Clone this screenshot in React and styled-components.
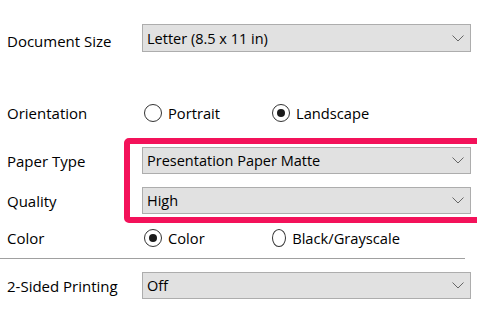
import React from 'react';
import styled, { createGlobalStyle } from 'styled-components';

const Global = createGlobalStyle`
  html, body {
    margin: 0;
    background: #ffffff;
    overflow: hidden;
  }
  body {
    font-family: "Open Sans", "Noto Sans", sans-serif;
    color: #000;
  }
`;

const Page = styled.div`
  width: 477px;
  height: 315px;
  padding-top: 24px;
  box-sizing: border-box;
  position: relative;
  overflow: hidden;
`;

const Row = styled.div`
  display: flex;
  align-items: center;
  height: ${p => p.$h || 27}px;
  margin-top: ${p => p.$mt || 0}px;
`;

const Label = styled.div`
  width: 142px;
  padding-left: 7px;
  box-sizing: border-box;
  font-size: 15px;
  padding-top: ${p => p.$drop || 0}px;
  flex-shrink: 0;
`;

const Select = styled.div`
  width: 329px;
  height: 100%;
  box-sizing: border-box;
  background: #e1e1e1;
  border: 1px solid #adadad;
  display: flex;
  align-items: center;
  justify-content: space-between;
  padding: 0 6px 0 4px;
  font-size: 14.5px;
`;

const Chevron = () => (
  <svg width="12" height="7" viewBox="0 0 12 7">
    <path d="M0.5 0.5 L6 6 L11.5 0.5" fill="none" stroke="#666" strokeWidth="1" />
  </svg>
);

const RadioGroup = styled.div`
  display: grid;
  grid-template-columns: 128px 128px;
  padding-left: 2px;
`;

const Option = styled.label`
  display: flex;
  align-items: center;
  gap: 6px;
  font-size: 14.7px;
`;

const Circle = styled.span`
  width: 18px;
  height: 18px;
  box-sizing: border-box;
  border: 1px solid #333;
  border-radius: 50%;
  display: flex;
  align-items: center;
  justify-content: center;
  background: #fff;
  &::after {
    content: '';
    width: 8px;
    height: 8px;
    border-radius: 50%;
    background: ${p => (p.$on ? '#1a1a1a' : 'transparent')};
  }
`;

const Highlight = styled.div`
  position: relative;
  margin-top: 20px;
  &::after {
    content: '';
    position: absolute;
    left: 124px;
    top: -9px;
    right: -20px;
    bottom: -9px;
    border: 6px solid #f3125a;
    border-radius: 5px;
    pointer-events: none;
  }
`;

const Divider = styled.hr`
  width: 465px;
  margin: 7px 0 0 0;
  border: 0;
  border-top: 1px solid #a0a0a0;
`;

function Dropdown({ value }) {
  return (
    <Select>
      <span>{value}</span>
      <Chevron />
    </Select>
  );
}

function Radio({ label, on }) {
  return (
    <Option>
      <Circle $on={on} />
      {label}
    </Option>
  );
}

export default function App() {
  return (
    <Page>
      <Global />
      <Row $h={28}>
        <Label $drop={6}>Document Size</Label>
        <Dropdown value="Letter (8.5 x 11 in)" />
      </Row>
      <Row $h={28} $mt={47}>
        <Label>Orientation</Label>
        <RadioGroup>
          <Radio label="Portrait" />
          <Radio label="Landscape" on />
        </RadioGroup>
      </Row>
      <Highlight>
        <Row>
          <Label>Paper Type</Label>
          <Dropdown value="Presentation Paper Matte" />
        </Row>
        <Row $mt={13}>
          <Label>Quality</Label>
          <Dropdown value="High" />
        </Row>
      </Highlight>
      <Row $mt={10}>
        <Label>Color</Label>
        <RadioGroup>
          <Radio label="Color" on />
          <Radio label="Black/Grayscale" />
        </RadioGroup>
      </Row>
      <Divider />
      <Row $mt={13}>
        <Label>2-Sided Printing</Label>
        <Dropdown value="Off" />
      </Row>
    </Page>
  );
}
